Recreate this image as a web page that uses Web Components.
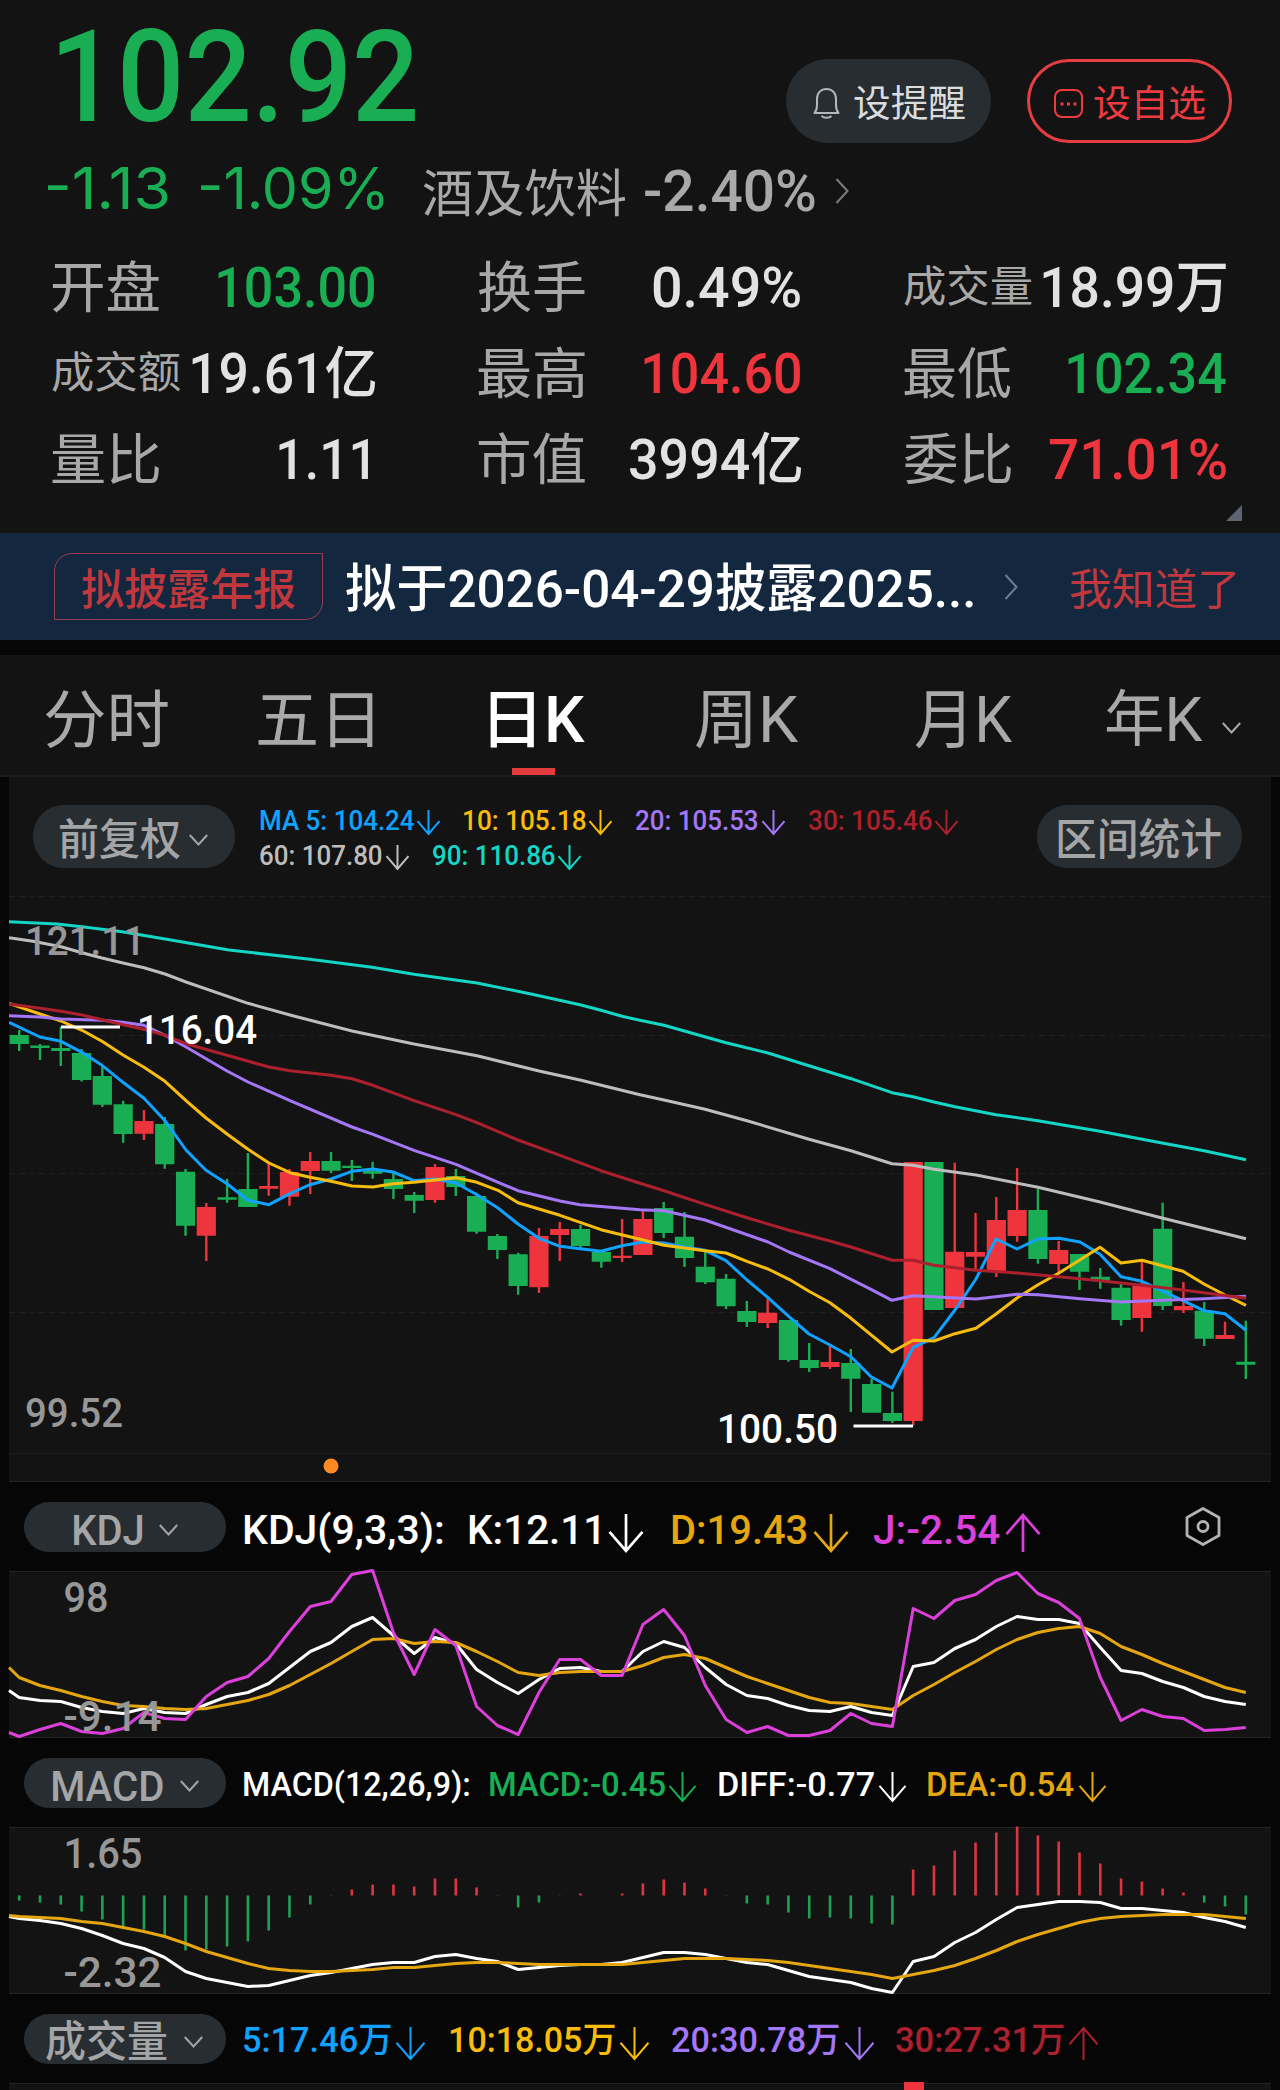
<!DOCTYPE html>
<html lang="zh-CN">
<head>
<meta charset="utf-8">
<title>日K</title>
<style>
  body {
    margin: 0;
    width: 1280px;
    height: 2090px;
    overflow: hidden;
    background: #060606;
    color: #a9a9a9;
    font-family: Roboto, "Noto Sans CJK SC", sans-serif;
  }
</style>
</head>
<body>
<stock-page></stock-page>

<script>
const STEP = 20.79;
const FIRST = 10.2;

const color = {
  up: "#ee343c",
  down: "#1aae54",
  blue: "#10a2ff",
  yellow: "#f8bc0c",
  purple: "#a377f7",
  red: "#ac202e",
  gray: "#bdbdbd",
  teal: "#13d6c4",
  gold: "#e5a60f",
  pink: "#dc40da",
};

// type, high, body top, body bottom, low
const candles = `g 1030 1035 1044 1051|g 1044 1045.5 1048 1060|g 1027 1048 1051 1066|g 1049 1053 1080 1081.5
g 1067 1076 1104.7 1107|g 1100.7 1104.3 1134 1142.7|r 1110 1121 1133.7 1140|g 1117 1124 1164.3 1168.7
g 1169 1171.7 1225.7 1235.7|r 1203 1207 1235.7 1261|g 1178.7 1197.3 1199.7 1202.7|g 1153 1189 1207 1207
r 1163.7 1186 1188.7 1195.7|r 1169 1172 1196.7 1205.7|r 1152 1161 1171 1194|g 1152 1161 1170.7 1173
g 1160 1165.7 1168 1181|g 1161.7 1171 1173.7 1178.7|g 1172.7 1179 1189 1199|g 1192 1195 1200.7 1213
r 1164 1167 1200 1202.7|g 1169 1176 1187 1196|g 1192.7 1196 1231.7 1233.7|g 1234 1236 1250 1259
g 1252.7 1254.3 1286 1294.7|r 1228 1236 1287.3 1293|r 1222 1229 1235 1261|g 1224.7 1229 1246 1248.7
g 1250 1252 1261.7 1267.7|r 1219 1255.7 1258 1262|r 1210 1219 1255 1255|g 1202 1208 1233 1238
g 1212 1236.7 1258 1267|g 1249 1266.7 1282.3 1284|g 1274 1278.7 1306.3 1309|g 1301 1311 1322 1327
r 1299 1312.7 1323 1328|g 1320 1320 1360 1361.7|g 1343 1360 1368 1372|r 1346 1362 1367 1369
g 1349 1363 1378.7 1412|g 1379 1384 1412.7 1412.7|g 1391.7 1413 1421 1423|r 1162 1162 1421 1425.7
g 1162 1162 1310 1310|r 1162.7 1251.7 1308 1308|r 1213 1252 1256.7 1270|r 1197 1220 1272 1277
r 1168 1210 1236 1241.7|g 1188.7 1210 1259 1263.7|r 1241 1250 1264 1273|g 1254 1254 1271.7 1290
g 1268 1276.7 1280.7 1288.7|g 1282 1287.7 1320 1325.7|r 1261.7 1285.7 1318 1331.7|g 1202.7 1228.7 1306 1310
r 1282 1306 1310.3 1313|g 1302 1310.7 1338.7 1346|r 1321.7 1335 1339 1339|g 1320.7 1361.7 1364.7 1379`
  .split(/[|\n]/).map((c) => c.split(" "));

const averages = [
  ["blue", "9,1022.3 40,1037 61,1041.3 82,1052.3 102,1065.3 123,1082.3 144,1098.3 165,1120.7 186,1150 206,1170.3 227,1183.7 248,1200.3 269,1204.7 290,1193.7 310,1184.7 331,1179 352,1171.3 373,1169 393,1172 414,1180.7 435,1179 456,1183 477,1194.7 498,1208 518,1224 539,1238.3 560,1246.3 601,1251.3 622,1245.7 643,1242 664,1243 684,1247 705,1250.3 726,1260.7 747,1280 768,1297.7 789,1316.7 809,1334 830,1345 851,1356.7 871,1376.7 892,1388 913,1347.7 934,1337.7 955,1310 976,1279 996,1239 1017,1249 1038,1239 1059,1238.3 1080,1242 1100,1254.3 1121,1276.7 1142,1281.3 1183,1300.7 1204,1310.7 1225,1313.7 1246,1330.3"],
  ["yellow", "9,1003.3 40,1014 61,1021 82,1030.3 102,1041.3 123,1055 144,1067.3 165,1081.3 186,1100.7 206,1118 227,1134 248,1149.3 269,1163 290,1172.7 310,1177.3 331,1181.3 352,1186 373,1187 393,1183.7 414,1182.3 435,1180 456,1177.7 477,1182.3 498,1190.3 518,1202.7 539,1209 560,1215.3 601,1229.7 640,1239.3 664,1245.3 705,1250.7 726,1253 747,1261.3 768,1269 789,1279.3 809,1291.3 830,1302.7 851,1318.3 892,1352 913,1340.3 934,1341 955,1333.7 976,1328.3 996,1314 1017,1298 1038,1284.7 1059,1273 1100,1247.3 1121,1263 1142,1260.3 1183,1271.3 1204,1284 1225,1295 1246,1305.3"],
  ["purple", "9,1015.7 40,1017 61,1019 102,1020.3 123,1022.3 144,1025.3 165,1035.3 186,1047 227,1071 248,1082 290,1100.7 352,1127 373,1134.3 414,1150.3 456,1164.3 477,1173.3 518,1190.7 560,1201 580,1204.7 640,1209.7 664,1210.7 705,1220 768,1242 789,1252 830,1268.7 871,1289.3 892,1300.3 913,1295.7 976,1299 1017,1294.3 1038,1294.7 1080,1298.7 1121,1302 1162,1300.3 1204,1298.7 1246,1296.3"],
  ["red", "9,1004 40,1008.3 61,1011.3 82,1015 102,1019.7 123,1024.7 144,1029.3 165,1035.3 186,1043.7 227,1055.3 269,1067 290,1070.7 331,1075.3 352,1078.7 373,1085.3 414,1100.7 456,1114.7 477,1122.7 518,1140 560,1155.3 601,1170.7 640,1183.3 664,1190.7 705,1204.3 747,1217.7 789,1230.3 830,1241 851,1247 892,1260.3 913,1260.3 934,1265.3 976,1270.3 1017,1273 1059,1276.7 1100,1280.7 1142,1285.3 1183,1290 1246,1298.3"],
  ["gray", "9,937.7 33,941.3 61,946.7 82,952.7 102,958 123,963 144,967.7 165,974 186,982 248,1003.3 290,1015 352,1031 414,1044 477,1055.7 539,1071 580,1080 640,1094.7 664,1100 705,1109.3 747,1120.7 809,1139.3 851,1150.7 892,1163.7 913,1165.3 934,1169.3 976,1175 1038,1187.3 1100,1202 1162,1218 1246,1238.7"],
  ["teal", "9,921.7 57,924 82,926.7 122,931.7 171,940 229,950 310,959.3 372,967.3 414,974.3 477,983 531,994 580,1004.7 601,1010.3 622,1016.3 640,1020.3 664,1025.3 726,1042.7 768,1053 809,1065.7 851,1078.7 892,1092.7 913,1096.7 934,1102 955,1106.7 996,1114.7 1038,1120.7 1100,1131.3 1162,1143 1204,1150.7 1246,1159.7"],
];

// first value lies on the left edge of the panel, then one for each candle
const kdj = {
  lines: [
    ["#fff", [119,126,129,130,136,140,142,137,141,142,133,125,121,112,96,80,71,55,46,64,82,66,72,98,111,122,108,97,96,100,100,80,70,76,96,113,124,127,134,139,140,135,141,144,95,91,77,68,55,45,48,48,52,76,99,102,110,116,125,130,133]],
    [color.gold, [96,106,114,119,125,130,134,135,137,138,137,133,129,123,114,103,92,80,68,67,72,70,71,80,90,101,104,101,100,100,100,94,86,83,87,96,105,112,119,126,131,132,135,138,124,113,101,90,78,68,61,57,55,62,75,83,92,100,108,116,121]],
    [color.pink, [161,165,158,152,160,162,157,141,147,148,125,111,105,87,60,35,30,3,-1,61,103,58,74,135,154,163,121,88,88,104,104,53,38,64,114,148,161,155,164,164,159,142,152,155,37,47,29,23,9,1,22,31,47,106,149,138,145,147,159,158,156]],
  ],
};

const macd = {
  bars: [-5,-7,-9,-16,-24,-31,-34,-40,-55,-54,-51,-46,-35,-22,-9,.6,6,11,11,9,17,17,8,.6,-12,-7,.6,2,0,2,12,16,13,7,.6,-8,-9,-17,-23,-22,-23,-28,-29,26,30,45,53,63,69,60,54,43,32,17,14,7,3,-7,-11,-19],
  lines: [
    ["#fff", [89,91,93,96,101,108,116,121,130,144,151,155,159,158,153,148,145,141,137,135,135,129,127,131,134,142,140,138,137,137,135,130,125,125,127,131,135,137,143,149,152,155,161,165,134,129,115,105,92,80,77,74,74,75,81,81,83,85,90,94,100]],
    [color.gold, [88,89,90,91,94,96,100,104,109,116,124,130,136,141,143,144,144,143,142,140,140,138,136,135,135,136,137,137,137,137,137,135,133,131,131,131,132,133,135,138,141,144,147,151,147,143,138,131,123,114,107,101,95,91,89,88,87,87,87,89,91]],
  ],
};

const panels = { kdj, macd };
const ruler = document.createElement("canvas").getContext("2d");

// Text squeezed to an exact width; its box runs from cap height to baseline
class FitText extends HTMLElement {
  constructor() {
    super();
    this.attachShadow({ mode: "open" });
    this.shadowRoot.innerHTML = `
<style>
:host { display: block; flex: none; white-space: nowrap; }
span { display: block; width: max-content; transform-origin: 0 0; white-space: pre; }
</style>
<span><slot></slot></span>`;
  }

  connectedCallback() {
    const size = +this.getAttribute("size");
    const width = +this.getAttribute("w");
    const weight = this.getAttribute("weight") || 400;
    const height = size * 0.711;
    this.style.cssText += `;width:${width}px;height:${height}px;font-size:${size}px;font-weight:${weight};line-height:${height}px`;
    ruler.font = `${weight} ${size}px ${getComputedStyle(this).fontFamily}`;
    const m = ruler.measureText(this.textContent);
    const scale = width / (m.actualBoundingBoxRight + m.actualBoundingBoxLeft);
    this.shadowRoot.querySelector("span").style.transform =
      `translate(${m.actualBoundingBoxLeft * scale}px, ${size * 0.014}px) scaleX(${scale})`;
  }
}

class LineArrow extends HTMLElement {
  connectedCallback() {
    const w = +this.getAttribute("w");
    const h = +this.getAttribute("h");
    const up = this.hasAttribute("up");
    const head = w * 0.56;
    this.attachShadow({ mode: "open" }).innerHTML = `
<style>:host { display: block; flex: none; width: ${w}px; height: ${h}px; } svg { display: block; overflow: visible; }</style>
<svg width="${w}" height="${h}" fill="none" stroke="currentColor" stroke-width="${w > 30 ? 2.7 : 2}">
  <g ${up ? `transform="matrix(1 0 0 -1 0 ${h})"` : ""}>
    <path d="M${w / 2} 0V${h - 1}M.5 ${h - 1 - head}L${w / 2} ${h - 1}L${w - 0.5} ${h - 1 - head}"/>
  </g>
</svg>`;
  }
}

class ChevronIcon extends HTMLElement {
  connectedCallback() {
    const right = this.hasAttribute("right");
    this.attachShadow({ mode: "open" }).innerHTML = `
<style>:host { display: block; flex: none; } svg { display: block; }</style>
${right
    ? `<svg width="14" height="26" viewBox="0 0 14 26" fill="none" stroke="currentColor" stroke-width="2"><path d="M1.5 1L12.5 13L1.5 25"/></svg>`
    : `<svg width="19" height="12" viewBox="0 0 19 12" fill="none" stroke="currentColor" stroke-width="2"><path d="M.8 1L9.5 10.5L18.2 1"/></svg>`}`;
  }
}

class PillButton extends HTMLElement {
  constructor() {
    super();
    this.attachShadow({ mode: "open" });
    this.shadowRoot.innerHTML = `
<style>
:host {
  display: flex;
  flex: none;
  box-sizing: border-box;
  align-items: center;
  justify-content: center;
  gap: 17px;
  width: 202px;
  height: 50px;
  padding-top: 6px;
  border-radius: 25px;
  background: #282d31;
  color: #a3a5a7;
}
:host([tall]) { height: 63px; border-radius: 31px; padding-top: 6px; gap: 9px; }
:host([big]) { width: 205px; height: 84px; border-radius: 42px; padding-top: 4px; gap: 14px; color: #dadcdd; }
:host([outline]) { border: 3px solid #e63d42; background: none; color: #ee3b42; gap: 11px; }
</style>
<slot></slot>`;
  }
}

// Reading followed by its trend arrow
class TrendValue extends HTMLElement {
  connectedCallback() {
    const a = (name) => this.getAttribute(name);
    this.attachShadow({ mode: "open" }).innerHTML = `
<style>
:host { display: flex; align-items: flex-start; color: ${color[a("tone")] || a("tone")}; }
line-arrow { margin: -1px 0 -20px ${a("gap")}px; }
</style>
<fit-text w="${a("w")}" size="${a("size")}" weight="500">${this.textContent}</fit-text>
${a("arrow") ? `<line-arrow w="${a("arrow").split(" ")[0]}" h="${a("arrow").split(" ")[1]}" ${this.hasAttribute("up") ? "up" : ""}></line-arrow>` : ""}`;
  }
}

class QuoteCell extends HTMLElement {
  connectedCallback() {
    const a = (name) => this.getAttribute(name);
    const small = a("label").length > 2;
    this.attachShadow({ mode: "open" }).innerHTML = `
<style>
:host { display: flex; align-items: flex-end; justify-content: space-between; height: 40px; }
.label { color: #a8a8a8; margin-left: -1px; margin-bottom: ${small ? 6 : 1}px; }
.value { color: ${color[a("tone")] || "#e2e2e2"}; margin-right: ${a("inset") || 1}px; }
</style>
<fit-text class="label" w="${small ? 128 : 107}" size="${small ? 43 : 55}">${a("label")}</fit-text>
<fit-text class="value" w="${a("w")}" size="56" weight="500">${this.textContent}</fit-text>`;
  }
}

class QuoteHead extends HTMLElement {
  connectedCallback() {
    this.attachShadow({ mode: "open" }).innerHTML = `
<style>
:host { display: block; box-sizing: border-box; height: 533px; padding: 30px 53px 0; background: #131313; }
.top { display: flex; justify-content: space-between; padding: 0 0 0 6px; margin-right: -5px; height: 113px; }
.price { color: #1aae54; }
.buttons { display: flex; align-items: flex-end; gap: 36px; }
.change { display: flex; align-items: flex-start; padding-top: 24px; margin-left: -5px; height: 76px; box-sizing: content-box; }
.inter { font-family: Inter, sans-serif; color: #1aae54; }
.grid { display: grid; grid-template-columns: repeat(3, 322px); column-gap: 104px; row-gap: 46px; padding-top: 25px; }
.corner { display: block; margin: 25px -15px 0 auto; }
svg { display: block; flex: none; }
</style>
<div class="top">
  <fit-text class="price" w="356" size="128" weight="500">102.92</fit-text>
  <div class="buttons">
    <pill-button big>
      <svg width="27" height="32" viewBox="0 0 27 32" fill="none" stroke="#b5b8ba" stroke-width="2" stroke-linejoin="round">
        <path d="M1.500 26H25.500C23.300 23.600 23 21 23 18V12C23 5.800 19 2 13.500 2S4 5.800 4 12V18C4 21 3.700 23.600 1.500 26Z"/>
        <path d="M8.500 29C11 31.400 16 31.400 18.500 29"/>
      </svg>
      <fit-text w="111" size="37" style="padding-top: 3px">设提醒</fit-text>
    </pill-button>
    <pill-button big outline>
      <svg width="29" height="29" viewBox="0 0 29 29" fill="none" stroke="currentColor" stroke-width="2">
        <rect x="1" y="1" width="27" height="27" rx="7"/>
        <path d="M6.500 15h3M13 15h3M19.500 15h3" stroke-width="3"/>
      </svg>
      <fit-text w="111" size="37" style="padding-top: 3px">设自选</fit-text>
    </pill-button>
  </div>
</div>
<div class="change">
  <fit-text class="inter" w="120" size="58">-1.13</fit-text>
  <fit-text class="inter" w="183" size="58" style="margin-left: 33px">-1.09%</fit-text>
  <fit-text w="203" size="51" style="margin: 8.500px 0 0 38.500px">酒及饮料</fit-text>
  <fit-text w="170" size="57" weight="500" style="margin: 4px 0 0 19px">-2.40%</fit-text>
  <chevron-icon right style="margin: 11px 0 0 20px; color: #7c7c7c"></chevron-icon>
</div>
<div class="grid">
  <quote-cell label="开盘" w="156" tone="down" inset="1">103.00</quote-cell>
  <quote-cell label="换手" w="147" inset="1">0.49%</quote-cell>
  <quote-cell label="成交量" w="183">18.99万</quote-cell>
  <quote-cell label="成交额" w="184" inset="-1">19.61亿</quote-cell>
  <quote-cell label="最高" w="156" tone="up" inset="1">104.60</quote-cell>
  <quote-cell label="最低" w="158" tone="down">102.34</quote-cell>
  <quote-cell label="量比" w="89" inset="7">1.11</quote-cell>
  <quote-cell label="市值" w="172" inset="-1">3994亿</quote-cell>
  <quote-cell label="委比" w="177" tone="up">71.01%</quote-cell>
</div>
<svg class="corner" width="16" height="16"><path d="M16 0V16H0Z" fill="#5c6472"/></svg>`;
  }
}

class NoticeBar extends HTMLElement {
  connectedCallback() {
    this.attachShadow({ mode: "open" }).innerHTML = `
<style>
:host { display: flex; align-items: center; box-sizing: border-box; height: 107px; padding-left: 54px; background: #13273e; }
.tag {
  display: flex;
  align-items: center;
  justify-content: center;
  box-sizing: border-box;
  width: 269px;
  height: 67px;
  padding-top: 5px;
  border: 1.5px solid #9d3b51;
  border-radius: 18px 0 18px 0;
}
.tag, .ok { color: #c0383d; }
.title { color: #fff; margin: 5px 31px 0 23px; }
chevron-icon { color: #6d7c8e; }
.ok { margin: 5px 0 0 52px; }
</style>
<div class="tag"><fit-text w="213" size="43" weight="500">拟披露年报</fit-text></div>
<fit-text class="title" w="627" size="52" weight="500">拟于2026-04-29披露2025...</fit-text>
<chevron-icon right></chevron-icon>
<fit-text class="ok" w="166" size="43">我知道了</fit-text>`;
  }
}

class PeriodTab extends HTMLElement {
  constructor() {
    super();
    this.attachShadow({ mode: "open" });
    this.shadowRoot.innerHTML = `
<style>
:host { display: flex; flex: 1; flex-direction: column; align-items: center; justify-content: space-between; height: 78px; color: #a9a9a9; }
:host([active]) { color: #fff; }
:host([active])::after { content: ""; width: 43px; height: 7px; background: #e33c3d; }
div { display: flex; align-items: flex-end; gap: 19px; height: 45.500px; }
</style>
<div><slot></slot></div>`;
  }
}

class PeriodTabs extends HTMLElement {
  connectedCallback() {
    this.attachShadow({ mode: "open" }).innerHTML = `
<style>
:host {
  display: flex;
  box-sizing: border-box;
  height: 122px;
  margin-top: 15px;
  padding-top: 42px;
  background: #131313;
  border-bottom: 2px solid #1c1c1c;
}
chevron-icon { margin-bottom: 9px; }
</style>
<period-tab><fit-text w="123" size="63">分时</fit-text></period-tab>
<period-tab><fit-text w="115" size="63" style="margin-right: 9px">五日</fit-text></period-tab>
<period-tab active><fit-text w="95" size="64" weight="500" style="margin-left: 9px">日K</fit-text></period-tab>
<period-tab><fit-text w="103" size="64" style="margin-left: 2px">周K</fit-text></period-tab>
<period-tab><fit-text w="98" size="64" style="margin-left: 8px">月K</fit-text></period-tab>
<period-tab><fit-text w="97" size="61" style="margin-bottom: 1px">年K</fit-text><chevron-icon></chevron-icon></period-tab>`;
  }
}

function svgLabel(x, y, width, text, fill) {
  return `<text x="${x}" y="${y}" fill="${fill || "#979797"}" textLength="${width}" lengthAdjust="spacingAndGlyphs">${text}</text>`;
}

class KlineChart extends HTMLElement {
  connectedCallback() {
    const sticks = candles.map(([type, high, top, bottom, low], i) => {
      const x = 9 + FIRST + STEP * i;
      const fill = type === "r" ? color.up : color.down;
      return `<path fill="${fill}" d="M${x - 9.6} ${top}h19.200V${bottom}h-19.200zM${x - 1.2} ${high}h2.400V${low}h-2.400z"/>`;
    }).join("");
    const lines = averages.map(([name, points]) =>
      `<polyline points="${points}" stroke="${color[name]}"/>`).join("");

    this.attachShadow({ mode: "open" }).innerHTML = `
<style>
:host { display: block; box-sizing: border-box; height: 705px; margin: 0 9px; background: #131313; border-bottom: 1px solid #222; }
.tools { display: flex; align-items: flex-start; padding: 28px 29px 0 24px; height: 65px; }
.ma { display: grid; row-gap: 15px; margin: 6px auto 0 25px; }
.ma div { display: flex; gap: 24px; }
svg { display: block; }
text { font-size: 41px; font-weight: 500; }
</style>
<div class="tools">
  <pill-button tall><fit-text w="120" size="43" weight="500">前复权</fit-text><chevron-icon></chevron-icon></pill-button>
  <div class="ma">
    <div>
      <trend-value tone="blue" w="154" size="27.5" gap="3" arrow="23 25">MA 5: 104.24</trend-value>
      <trend-value tone="yellow" w="122" size="27.5" gap="3" arrow="23 25">10: 105.18</trend-value>
      <trend-value tone="purple" w="122" size="27.5" gap="3.5" arrow="23 25">20: 105.53</trend-value>
      <trend-value tone="red" w="123" size="27.5" gap="3" arrow="23 25">30: 105.46</trend-value>
    </div>
    <div>
      <trend-value tone="gray" w="122" size="27.5" gap="4" arrow="23 25">60: 107.80</trend-value>
      <trend-value tone="teal" w="122" size="27.5" gap="3" arrow="23 25">90: 110.86</trend-value>
    </div>
  </div>
  <pill-button tall style="width: 205px"><fit-text w="163" size="43" weight="500">区间统计</fit-text></pill-button>
</div>
<svg width="1262" height="611" viewBox="9 870 1262 611">
  <path d="M9 896.500H1271M9 1035.500H1271M9 1173.500H1271M9 1312.500H1271" stroke="#202020" stroke-dasharray="6 4"/>
  <path d="M9 1453.500H1271" stroke="#1e1e1e"/>
  ${sticks}
  <g fill="none" stroke-width="3" stroke-linejoin="round">${lines}</g>
  <path d="M61 1027H120M853.500 1426H913" stroke="#fff" stroke-width="3"/>
  ${svgLabel(25, 955, 120, "121.11")}
  ${svgLabel(25, 1427, 98, "99.52")}
  ${svgLabel(137, 1044, 120, "116.04", "#fff")}
  ${svgLabel(717, 1443, 121, "100.50", "#fff")}
  <circle cx="331" cy="1466" r="7.500" fill="#ff8a24"/>
</svg>`;
  }
}

class IndicatorBar extends HTMLElement {
  constructor() {
    super();
    this.attachShadow({ mode: "open" });
    this.shadowRoot.innerHTML = `
<style>
:host { display: flex; align-items: center; box-sizing: border-box; height: 89px; padding: 0 59px 0 24px; }
.values { display: flex; flex: 1; align-items: center; margin-left: 17.500px; padding-top: var(--drop, 4px); }
chevron-icon { margin-right: var(--shift, 0); }
</style>
<pill-button><slot name="name"></slot><chevron-icon></chevron-icon></pill-button>
<div class="values"><slot></slot></div>
<slot name="end"></slot>`;
  }
}

class IndicatorPanel extends HTMLElement {
  connectedCallback() {
    const data = panels[this.getAttribute("data")];
    const bars = (data.bars || []).map((v, i) => {
      const x = FIRST + STEP * i;
      const stroke = Math.abs(v) < 1 ? "#3a3a3a" : v > 0 ? "#dc3541" : "#1ea153";
      return `<path d="M${x} 67.500V${67.5 - v}" stroke="${stroke}"/>`;
    }).join("");
    const lines = data.lines.map(([stroke, ys]) => {
      const points = ys.map((y, i) => `${i ? (FIRST + STEP * (i - 1)).toFixed(1) : 0},${y - 0.5}`).join(" ");
      return `<polyline points="${points}" stroke="${stroke}"/>`;
    }).join("");
    const [high, highW, low, lowW] = this.getAttribute("range").split(" ");

    this.attachShadow({ mode: "open" }).innerHTML = `
<style>
:host { display: block; box-sizing: border-box; height: 167px; margin: 0 9px; background: #131313; border: solid #232323; border-width: 1px 0; }
svg { display: block; overflow: visible; }
text { font-size: 42px; font-weight: 500; }
</style>
<svg width="1262" height="165">
  <g stroke-width="2.6">${bars}</g>
  <g fill="none" stroke-width="3" stroke-linejoin="round">${lines}</g>
  ${svgLabel(54.5, 40, highW, high)}
  ${svgLabel(54.5, 159, lowW, low)}
</svg>`;
  }
}

class VolumePanel extends HTMLElement {
  connectedCallback() {
    this.attachShadow({ mode: "open" }).innerHTML = `
<style>
:host { display: block; height: 7px; margin: 0 9px; background: #131313; border-top: 1px solid #232323; }
svg { display: block; margin-top: -2px; }
</style>
<svg width="1262" height="9"><path d="M895 0h20V9h-20z" fill="${color.up}"/></svg>`;
  }
}

class StockPage extends HTMLElement {
  connectedCallback() {
    this.attachShadow({ mode: "open" }).innerHTML = `
<style>:host { display: block; } .hex { display: block; }</style>
<quote-head></quote-head>
<notice-bar></notice-bar>
<period-tabs></period-tabs>
<kline-chart></kline-chart>

<indicator-bar style="--drop: 6px; --shift: -2px">
  <fit-text slot="name" w="68.5" size="42" weight="500">KDJ</fit-text>
  <trend-value tone="#fff" w="199" size="41">KDJ(9,3,3):</trend-value>
  <trend-value style="margin-left: 26px" tone="#fff" w="130" size="41" gap="10.5" arrow="34 38">K:12.11</trend-value>
  <trend-value style="margin-left: 29px" tone="gold" w="135" size="41" gap="6.5" arrow="34 38">D:19.43</trend-value>
  <trend-value style="margin-left: 25px" tone="pink" w="127" size="41" gap="6" arrow="34 38" up>J:-2.54</trend-value>
  <svg slot="end" class="hex" width="36" height="39" viewBox="0 0 36 39" fill="none" stroke="#b3b3b3" stroke-width="2.8" stroke-linejoin="round">
    <path d="M18 1.500L34 10.500V28.500L18 37.500L2 28.500V10.500Z"/><circle cx="18" cy="19.500" r="5"/>
  </svg>
</indicator-bar>
<indicator-panel data="kdj" range="98 45 -9.14 98"></indicator-panel>

<indicator-bar style="--shift: -1px">
  <fit-text slot="name" w="110" size="42" weight="500">MACD</fit-text>
  <trend-value tone="#fff" w="225" size="33.5">MACD(12,26,9):</trend-value>
  <trend-value style="margin-left: 21px" tone="down" w="175" size="33.5" gap="4.5" arrow="27 30">MACD:-0.45</trend-value>
  <trend-value style="margin-left: 23px" tone="#fff" w="155" size="33.5" gap="5" arrow="27 30">DIFF:-0.77</trend-value>
  <trend-value style="margin-left: 22px" tone="gold" w="146" size="33.5" gap="4.5" arrow="27 30">DEA:-0.54</trend-value>
</indicator-bar>
<indicator-panel data="macd" range="1.65 79 -2.32 98"></indicator-panel>

<indicator-bar style="--shift: 2px">
  <fit-text slot="name" w="121" size="43" weight="500">成交量</fit-text>
  <trend-value tone="blue" w="147" size="35.5" gap="5" arrow="29 33">5:17.46万</trend-value>
  <trend-value style="margin-left: 25px" tone="yellow" w="165" size="35.5" gap="5.5" arrow="29 33">10:18.05万</trend-value>
  <trend-value style="margin-left: 23px" tone="purple" w="167" size="35.5" gap="5.5" arrow="29 33">20:30.78万</trend-value>
  <trend-value style="margin-left: 22px" tone="red" w="168" size="35.5" gap="5.5" arrow="29 33" up>30:27.31万</trend-value>
</indicator-bar>
<volume-panel></volume-panel>`;
  }
}

customElements.define("fit-text", FitText);
customElements.define("line-arrow", LineArrow);
customElements.define("chevron-icon", ChevronIcon);
customElements.define("pill-button", PillButton);
customElements.define("trend-value", TrendValue);
customElements.define("quote-cell", QuoteCell);
customElements.define("quote-head", QuoteHead);
customElements.define("notice-bar", NoticeBar);
customElements.define("period-tab", PeriodTab);
customElements.define("period-tabs", PeriodTabs);
customElements.define("kline-chart", KlineChart);
customElements.define("indicator-bar", IndicatorBar);
customElements.define("indicator-panel", IndicatorPanel);
customElements.define("volume-panel", VolumePanel);
customElements.define("stock-page", StockPage);
</script>
</body>
</html>
